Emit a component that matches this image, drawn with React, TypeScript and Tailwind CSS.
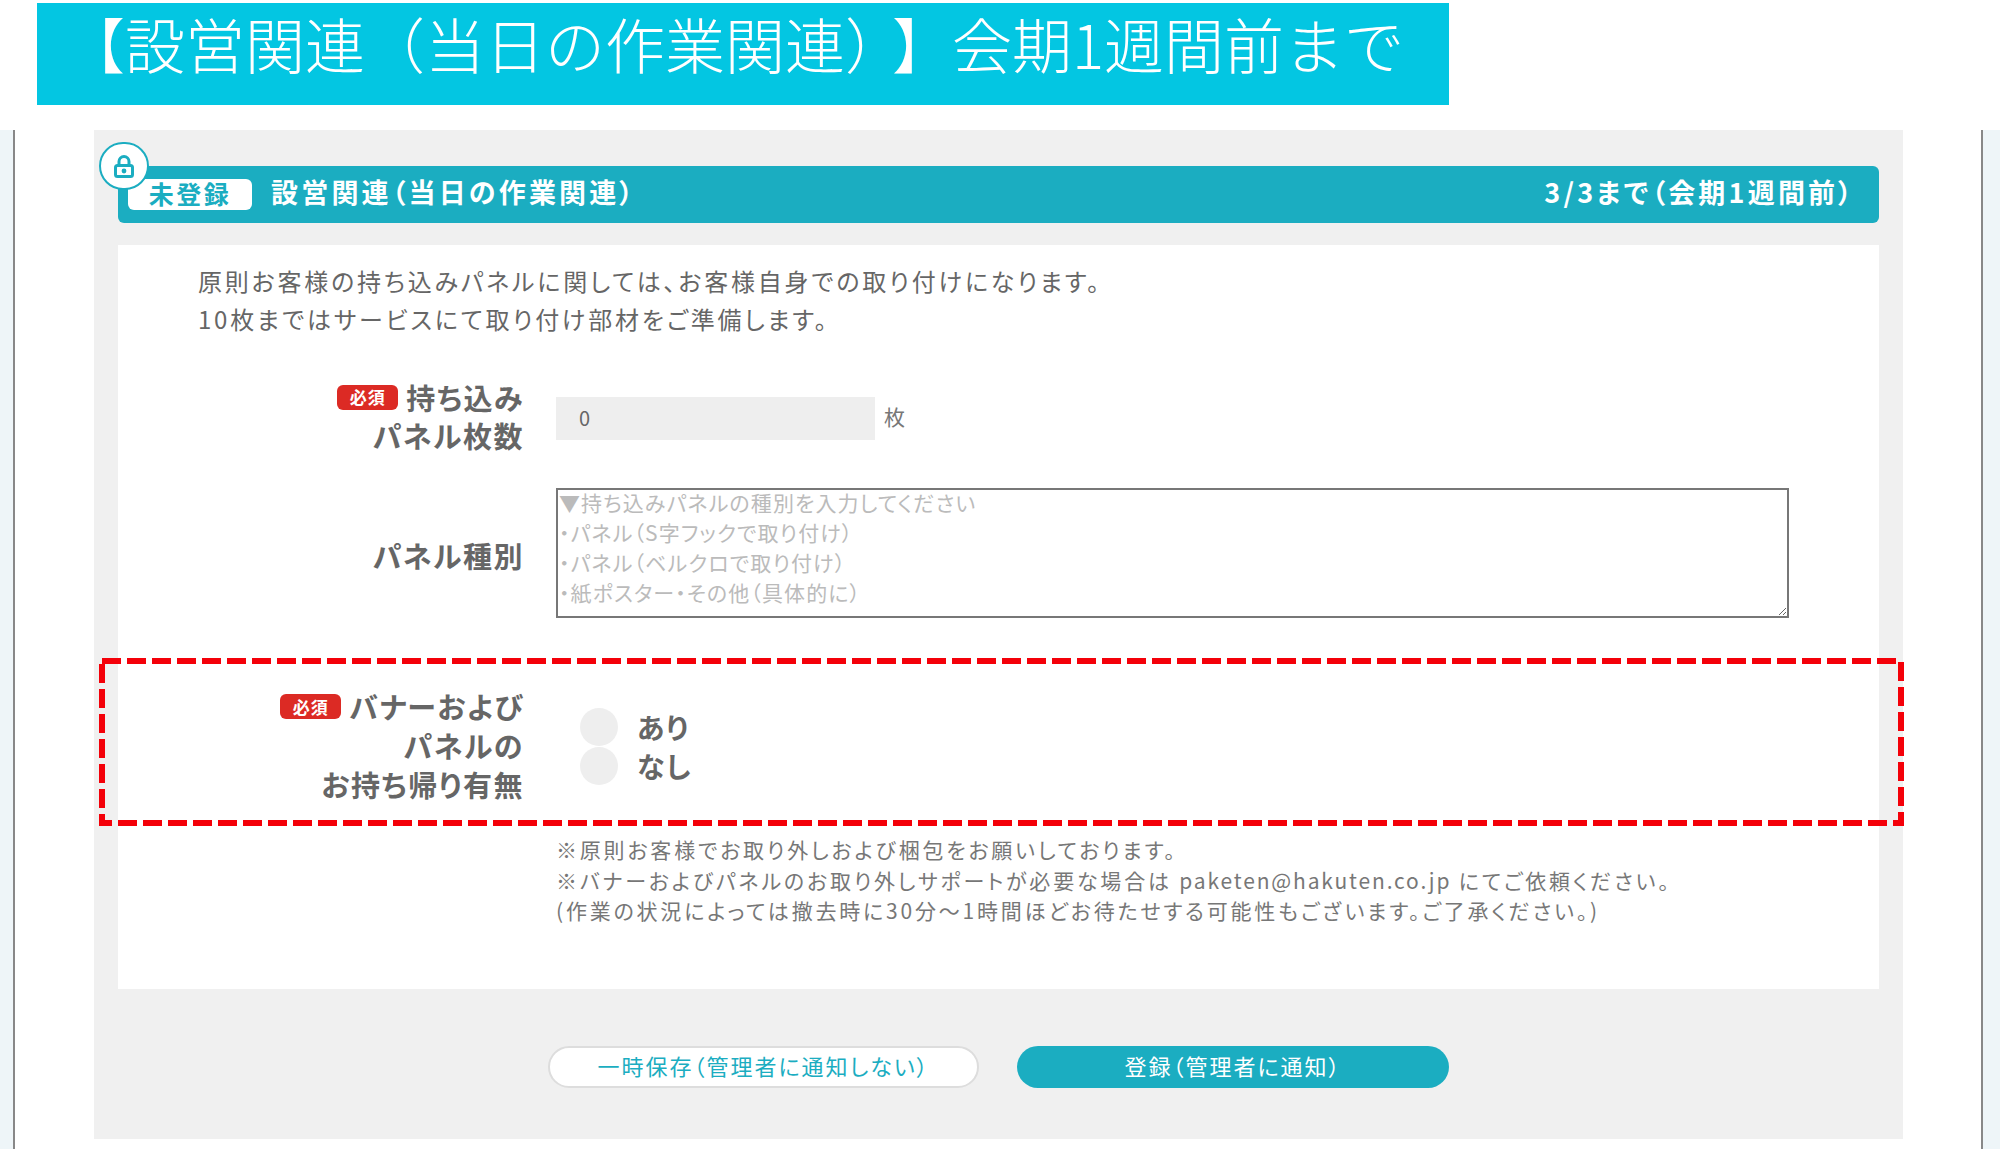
const PALT = "[font-feature-settings:'palt']";

function RequiredBadge() {
  return (
    <span className="inline-flex h-[25px] w-[61px] items-center justify-center rounded-[6px] bg-[#dc2a24] text-[17px] font-bold tracking-[1px] text-white">
      必須
    </span>
  );
}

function LockBadge() {
  return (
    <div className="absolute left-[-19px] top-[-24px] flex h-[48px] w-[50px] items-center justify-center rounded-full border-2 border-[#1badc1] bg-white">
      <svg width="20" height="23" viewBox="0 0 20 23" fill="none" stroke="#1badc1" strokeWidth="3">
        <path d="M5 11V6.5a5 5 0 0 1 10 0V11" />
        <rect x="1.5" y="10.5" width="17" height="11" rx="2" />
        <circle cx="10" cy="16" r="2.4" fill="#1badc1" stroke="none" />
      </svg>
    </div>
  );
}

export default function App() {
  return (
    <div className="relative h-[1149px] w-[2000px] overflow-hidden bg-white font-['Noto_Sans_CJK_JP',sans-serif]">
      <div className="ml-[37px] mt-[3px] h-[102px] w-[1412px] bg-[#03c6e2] pl-[28px] text-[60px] leading-[79px] font-light text-white">
        【設営関連（当日の作業関連）<span className="ml-[17px]">】</span>会期1週間前まで
      </div>

      <div className={`mt-[25px] flex h-[1019px] ${PALT}`}>
        <div className="w-[15px] border-r-2 border-[#888888] bg-[#eef5f8]" />
        <div className="ml-[79px] w-[1809px]">
          <div className="h-[1009px] bg-[#f0f0f0] px-[24px] pt-[36px]">
            <div className="relative flex h-[57px] items-center justify-between rounded-[6px] bg-[#1badc1] pl-[10px] pr-[24px] font-bold text-white">
              <LockBadge />
              <div className="flex items-center">
                <span className="flex h-[31px] w-[124px] items-center justify-center rounded-[6px] bg-white pb-[2px] text-[25px] tracking-[2.5px] text-[#1badc1]">未登録</span>
                <span className="ml-[19px] pb-[5px] text-[27px] tracking-[3.2px]">設営関連（当日の作業関連）</span>
              </div>
              <span className="pb-[5px] text-[27px] tracking-[3.2px]">3/3まで（会期1週間前）</span>
            </div>

            <div className="mt-[22px] h-[744px] bg-white pt-[17px]">
              <div className="pl-[80px] text-[24px] leading-[37.5px] tracking-[2.8px] text-[#666666]">
                <p>原則お客様の持ち込みパネルに関しては、お客様自身での取り付けになります。</p>
                <p>10枚まではサービスにて取り付け部材をご準備します。</p>
              </div>

              <div className="mt-[41px] flex items-center">
                <div className="w-[406px] text-right text-[29px] leading-[38px] font-bold tracking-[1.5px] text-[#666666]">
                  <div className="flex items-center justify-end gap-[8px]"><RequiredBadge /><span>持ち込み</span></div>
                  <div>パネル枚数</div>
                </div>
                <div className="ml-[32px] mt-[4px] flex h-[43px] w-[319px] items-center bg-[#eeeeee] pl-[23px] text-[20px] text-[#666666]">0</div>
                <span className="ml-[9px] mt-[2px] text-[21px] text-[#777777]">枚</span>
              </div>

              <div className="mt-[34px] flex items-center">
                <div className="w-[406px] pt-[5px] text-right text-[29px] font-bold tracking-[1.5px] text-[#666666]">パネル種別</div>
                <textarea
                  readOnly
                  className="ml-[32px] h-[130px] w-[1233px] border-2 border-[#777777] px-[1px] text-[21px] leading-[30px] tracking-[1.1px] outline-none placeholder:-translate-y-[3px] placeholder:text-[#bbbbbb]"
                  placeholder={"▼持ち込みパネルの種別を入力してください\n・パネル（S字フックで取り付け）\n・パネル（ベルクロで取り付け）\n・紙ポスター・その他（具体的に）"}
                />
              </div>

              <div className="mt-[69px] flex items-center">
                <div className="w-[406px] text-right text-[29px] leading-[39px] font-bold tracking-[1.5px] text-[#666666]">
                  <div className="flex items-center justify-end gap-[8px]"><RequiredBadge /><span>バナーおよび</span></div>
                  <div>パネルの</div>
                  <div>お持ち帰り有無</div>
                </div>
                <div className="ml-[56px] mt-[1px] flex flex-col gap-[1px] text-[28px] font-bold tracking-[1.5px] text-[#666666]">
                  <div className="flex h-[38px] items-center gap-[19px]"><span className="h-[38px] w-[38px] rounded-full bg-[#eeeeee]" />あり</div>
                  <div className="flex h-[38px] items-center gap-[19px]"><span className="h-[38px] w-[38px] rounded-full bg-[#eeeeee]" />なし</div>
                </div>
              </div>

              <div className="ml-[438px] mt-[30px] text-[21px] leading-[30.5px] tracking-[2.8px] text-[#777777]">
                <p>※原則お客様でお取り外しおよび梱包をお願いしております。</p>
                <p>※バナーおよびパネルのお取り外しサポートが必要な場合は <span className="tracking-[1.85px]">paketen@hakuten.co.jp</span> にてご依頼ください。</p>
                <p>(作業の状況によっては撤去時に30分～1時間ほどお待たせする可能性もございます。ご了承ください。)</p>
              </div>
            </div>

            <div className="mt-[57px] flex justify-center gap-[38px] text-[22px] tracking-[2px]">
              <button className="h-[42px] w-[431px] rounded-full border-2 border-[#dddddd] bg-white pb-[3px] text-[#1badc1]">一時保存（管理者に通知しない）</button>
              <button className="h-[42px] w-[432px] rounded-full bg-[#1badc1] pb-[3px] text-white">登録（管理者に通知）</button>
            </div>
          </div>
        </div>
        <div className="ml-[78px] flex-1 border-l-2 border-[#888888] bg-[#eef5f8]" />
      </div>

      {/* red highlight drawn over the form */}
      <svg className="pointer-events-none absolute left-0 top-0" width="2000" height="1149" fill="none">
        <rect x="102" y="661" width="1799" height="162" stroke="#f40009" strokeWidth="6" strokeDasharray="19 6" />
      </svg>
    </div>
  );
}
